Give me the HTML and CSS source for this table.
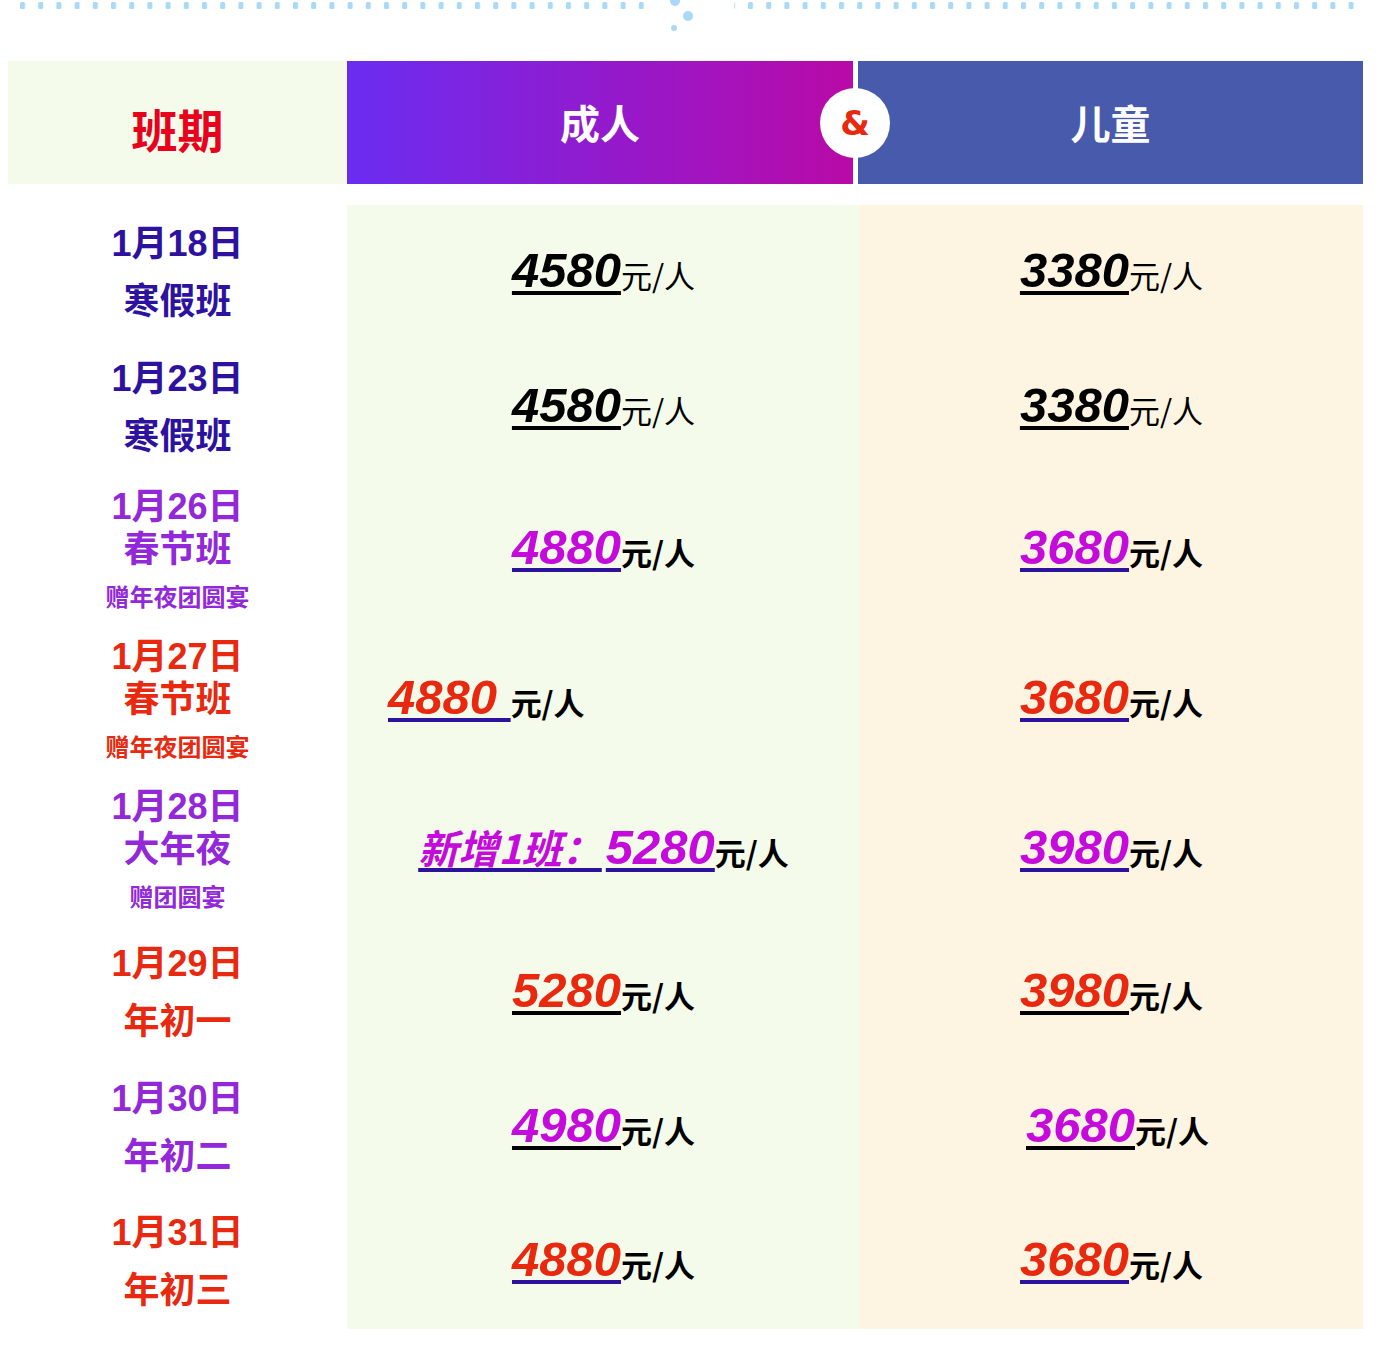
FILE: index.html
```html
<!DOCTYPE html>
<html lang="zh">
<head>
<meta charset="utf-8">
<title>班期价格</title>
<link rel="stylesheet" href="styles.css">
</head>
<body>
<div class="page">
  <svg class="deco" width="1397" height="61" viewBox="0 0 1397 61">
    <defs>
      <pattern id="dash" x="20" y="0" width="18.2" height="61" patternUnits="userSpaceOnUse">
        <rect x="0" y="2" width="5" height="7" rx="1.5" fill="#a9d9f7"/>
      </pattern>
    </defs>
    <rect x="20" y="0" width="624" height="12" fill="url(#dash)"/>
    <rect x="734" y="0" width="622" height="12" fill="url(#dash)"/>
    <circle cx="675" cy="1" r="5" fill="#a9d9f7"/>
    <circle cx="688" cy="16" r="5" fill="#a9d9f7"/>
    <circle cx="674" cy="28" r="3" fill="#a9d9f7"/>
  </svg>

  <div class="head">
    <div class="h-period">班期</div>
    <div class="h-adult">成人</div>
    <div class="h-child">儿童</div>
    <div class="amp">&amp;</div>
  </div>

  <div class="grid">
    <div class="date indigo"><div class="big">1月18日</div><div class="big">寒假班</div></div>
    <div class="adult"><span class="num black ul-black">4580</span><span class="unit light">元/人</span></div>
    <div class="child"><span class="num black ul-black">3380</span><span class="unit light">元/人</span></div>

    <div class="date indigo"><div class="big">1月23日</div><div class="big">寒假班</div></div>
    <div class="adult"><span class="num black ul-black">4580</span><span class="unit light">元/人</span></div>
    <div class="child"><span class="num black ul-black">3380</span><span class="unit light">元/人</span></div>

    <div class="date tri purple"><div class="big">1月26日</div><div class="big">春节班</div><div class="small">赠年夜团圆宴</div></div>
    <div class="adult"><span class="num magenta ul-indigo">4880</span><span class="unit">元/人</span></div>
    <div class="child"><span class="num magenta ul-indigo">3680</span><span class="unit">元/人</span></div>

    <div class="date tri red"><div class="big">1月27日</div><div class="big">春节班</div><div class="small">赠年夜团圆宴</div></div>
    <div class="adult left"><span class="num redc ul-indigo">4880&nbsp;</span><span class="unit">元/人</span></div>
    <div class="child"><span class="num redc ul-indigo">3680</span><span class="unit">元/人</span></div>

    <div class="date tri purple"><div class="big">1月28日</div><div class="big">大年夜</div><div class="small">赠团圆宴</div></div>
    <div class="adult"><span class="num magenta ul-indigo"><span class="cn">新增1班：</span>5280</span><span class="unit">元/人</span></div>
    <div class="child"><span class="num magenta ul-indigo">3980</span><span class="unit">元/人</span></div>

    <div class="date red"><div class="big">1月29日</div><div class="big">年初一</div></div>
    <div class="adult"><span class="num redc ul-black">5280</span><span class="unit">元/人</span></div>
    <div class="child"><span class="num redc ul-black">3980</span><span class="unit">元/人</span></div>

    <div class="date purple"><div class="big">1月30日</div><div class="big">年初二</div></div>
    <div class="adult"><span class="num magenta ul-black">4980</span><span class="unit">元/人</span></div>
    <div class="child shift"><span class="num magenta ul-black">3680</span><span class="unit">元/人</span></div>

    <div class="date red"><div class="big">1月31日</div><div class="big">年初三</div></div>
    <div class="adult"><span class="num redc ul-indigo">4880</span><span class="unit">元/人</span></div>
    <div class="child"><span class="num redc ul-indigo">3680</span><span class="unit">元/人</span></div>
  </div>
</div>
</body>
</html>
```

FILE: styles.css
```css
html, body {
  margin: 0;
  padding: 0;
  background: #ffffff;
}

body {
  font-family: "Liberation Sans", "Noto Sans CJK SC", sans-serif;
  width: 1397px;
  height: 1361px;
  overflow: hidden;
}

.page {
  width: 1397px;
}

.deco {
  display: block;
}

.head {
  position: relative;
  margin-left: 8px;
  width: 1355px;
  height: 123px;
  display: grid;
  grid-template-columns: 339px 506px 510px;
}

.h-period,
.h-adult,
.h-child {
  display: flex;
  align-items: center;
  justify-content: center;
  font-weight: 700;
  font-family: "Noto Sans CJK SC", "Liberation Sans", sans-serif;
}

.h-period {
  background: #f4fbea;
  color: #e8001c;
  font-size: 46px;
  padding-top: 10px;
}

.h-adult {
  background: linear-gradient(90deg, #6a2df1 0%, #9a17c6 60%, #b90aa6 100%);
  color: #ffffff;
  font-size: 40px;
  padding-bottom: 2px;
}

.h-child {
  background: #485aab;
  color: #ffffff;
  font-size: 40px;
  margin-left: 5px;
  padding-bottom: 2px;
}

.amp {
  position: absolute;
  left: 812px;
  top: 27px;
  width: 70px;
  height: 70px;
  border-radius: 50%;
  background: #ffffff;
  color: #e8290f;
  font-family: "DejaVu Sans", "Liberation Sans", sans-serif;
  font-weight: 700;
  font-size: 34px;
  display: flex;
  align-items: center;
  justify-content: center;
}

.grid {
  margin-top: 21px;
  margin-left: 8px;
  width: 1355px;
  display: grid;
  grid-template-columns: 339px 513px 503px;
  grid-template-rows: 135px 135px 150px 150px 150px 135px 135px 134px;
}

.date {
  display: flex;
  flex-direction: column;
  align-items: center;
  justify-content: center;
  font-weight: 700;
  font-family: "Liberation Sans", "Noto Sans CJK SC", sans-serif;
}

.date .big {
  font-size: 36px;
  line-height: 58px;
}

.date.tri {
  justify-content: flex-start;
  padding-top: 10px;
}

.date.tri .big {
  line-height: 43px;
}

.date.tri .small {
  font-size: 24px;
  line-height: 53px;
}

.indigo { color: #2c129f; }
.purple { color: #9228d8; }
.red { color: #e8290f; }

.adult,
.child {
  display: flex;
  align-items: center;
  justify-content: center;
  white-space: nowrap;
  padding-bottom: 6px;
}

.adult {
  background: #f4fbea;
}

.child {
  background: #fdf5e1;
}

.adult.left {
  justify-content: flex-start;
  padding-left: 41px;
}

.child.shift {
  padding-left: 12px;
}

.num {
  font-family: "Liberation Sans", "Noto Sans CJK SC", sans-serif;
  font-weight: 700;
  font-style: italic;
  font-size: 49px;
  line-height: 60px;
  text-decoration: underline;
  text-decoration-thickness: 4px;
  text-underline-offset: 4px;
}

.num .cn {
  font-size: 40px;
  font-family: "Noto Sans CJK SC", sans-serif;
  margin-right: 4px;
}

.unit {
  font-family: "Noto Sans CJK SC", "Liberation Sans", sans-serif;
  font-weight: 700;
  font-size: 31px;
  line-height: 60px;
  color: #000000;
  padding-top: 10px;
}

.unit.light {
  font-weight: 400;
}

.black { color: #000000; }
.magenta { color: #c40bdc; }
.redc { color: #e8290f; }

.ul-black { text-decoration-color: #000000; }
.ul-indigo { text-decoration-color: #2c129f; }
```
